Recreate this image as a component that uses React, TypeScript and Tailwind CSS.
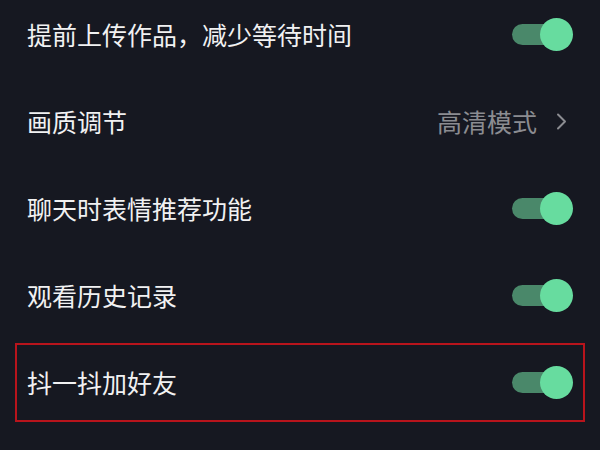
const font = "font-['Noto_Sans_CJK_SC','Noto_Sans',sans-serif]";

type Row = { label: string; value?: string };

const rows: Row[] = [
  { label: "提前上传作品，减少等待时间" },
  { label: "画质调节", value: "高清模式" },
  { label: "聊天时表情推荐功能" },
  { label: "观看历史记录" },
];

function Toggle() {
  return (
    <span className="relative block w-[61px] h-[33px] shrink-0">
      <span className="absolute left-0 top-[6px] w-[54px] h-[21px] rounded-full bg-[#4a886a]" />
      <span className="absolute right-0 top-0 w-[33px] h-[33px] rounded-full bg-[#67dc9f]" />
    </span>
  );
}

function Chevron() {
  return (
    <svg width="11" height="17" viewBox="0 0 11 17" fill="none" aria-hidden="true">
      <path d="M2 1.5L9 8.5L2 15.5" stroke="#8b8c91" strokeWidth="2" strokeLinecap="round" strokeLinejoin="round" />
    </svg>
  );
}

export default function App() {
  return (
    <div className={`w-[600px] h-[450px] overflow-hidden bg-[#161821] ${font}`}>
      <div className="-mt-[9px]">
        {rows.map((r) => (
          <div key={r.label} className="h-[87px] flex items-center justify-between pl-[27px] pr-[27px]">
            <span className="text-[25px] leading-none text-[#f1f1f2]">{r.label}</span>
            {r.value ? (
              <span className="flex items-center gap-[19px] pr-[6px]">
                <span className="text-[25px] leading-none text-[#8b8c91]">{r.value}</span>
                <Chevron />
              </span>
            ) : (
              <Toggle />
            )}
          </div>
        ))}
        {/* highlighted row */}
        <div className="h-[87px] flex items-center px-[15px]">
          <div className="w-full h-[79px] border-2 border-[#b8141c] flex items-center justify-between pl-[10px] pr-[10px]">
            <span className="text-[25px] leading-none text-[#f1f1f2]">抖一抖加好友</span>
            <Toggle />
          </div>
        </div>
      </div>
    </div>
  );
}
